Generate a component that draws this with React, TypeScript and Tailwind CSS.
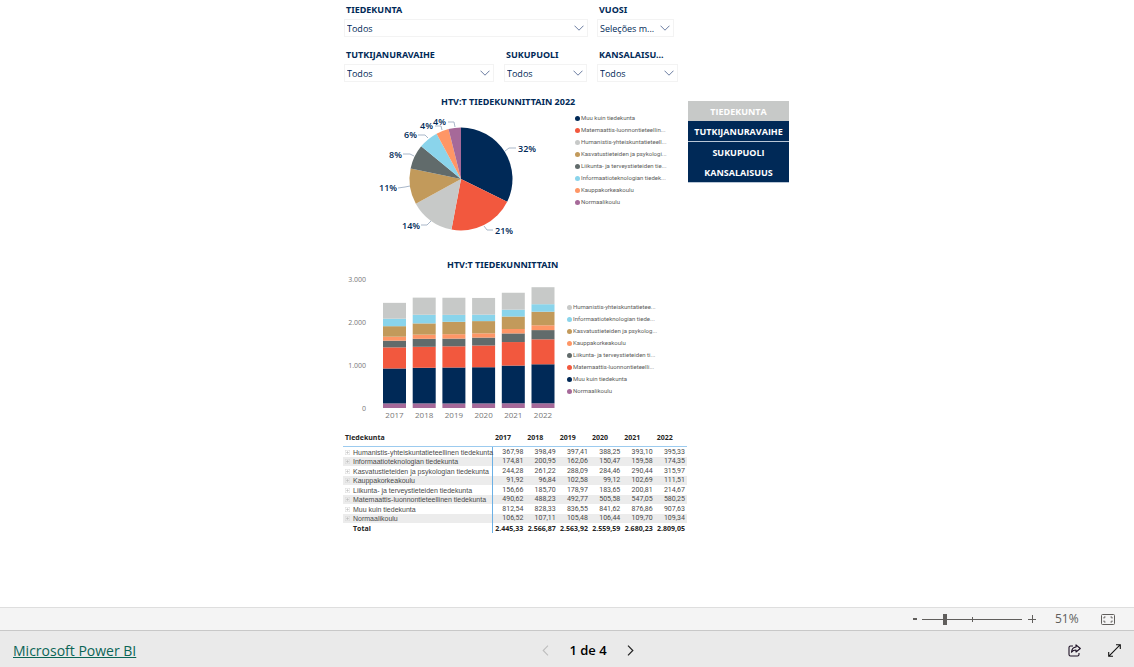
import { useState } from 'react';

const colors = {
  navy: '#002957',
  red: '#F2583E',
  grey: '#C7C9C8',
  gold: '#C29A5B',
  slate: '#616B6B',
  sky: '#8AD4EB',
  orange: '#FE9666',
  purple: '#A66999',
};

const years = ['2017', '2018', '2019', '2020', '2021', '2022'];

const faculties = [
  { name: 'Humanistis-yhteiskuntatieteellinen tiedekunta', short: 'Humanistis-yhteiskuntatietee...', color: colors.grey, values: [367.98, 398.49, 397.41, 388.25, 393.1, 395.33] },
  { name: 'Informaatioteknologian tiedekunta', short: 'Informaatioteknologian tiede...', color: colors.sky, values: [174.81, 200.95, 162.06, 150.47, 159.58, 174.35] },
  { name: 'Kasvatustieteiden ja psykologian tiedekunta', short: 'Kasvatustieteiden ja psykolog...', color: colors.gold, values: [244.28, 261.22, 288.09, 284.46, 290.44, 315.97] },
  { name: 'Kauppakorkeakoulu', short: 'Kauppakorkeakoulu', color: colors.orange, values: [91.92, 96.84, 102.58, 99.12, 102.69, 111.51] },
  { name: 'Liikunta- ja terveystieteiden tiedekunta', short: 'Liikunta- ja terveystieteiden ti...', color: colors.slate, values: [156.66, 185.7, 178.97, 183.65, 200.81, 214.67] },
  { name: 'Matemaattis-luonnontieteellinen tiedekunta', short: 'Matemaattis-luonnontieteelli...', color: colors.red, values: [490.62, 488.23, 492.77, 505.58, 547.05, 580.25] },
  { name: 'Muu kuin tiedekunta', short: 'Muu kuin tiedekunta', color: colors.navy, values: [812.54, 828.33, 836.55, 841.62, 876.86, 907.63] },
  { name: 'Normaalikoulu', short: 'Normaalikoulu', color: colors.purple, values: [106.52, 107.11, 105.48, 106.44, 109.7, 109.34] },
];

const totals = ['2.445,33', '2.566,87', '2.563,92', '2.559,59', '2.680,23', '2.809,05'];

const pieData = [
  { name: 'Muu kuin tiedekunta', value: 907.63, color: colors.navy, label: '32%', x: 143, y: 48, line: '130,47 134,44 141,44' },
  { name: 'Matemaattis-luonnontieteellin...', value: 580.25, color: colors.red, label: '21%', x: 120, y: 130, line: '109,122 112,126 118,126' },
  { name: 'Humanistis-yhteiskuntatieteell...', value: 395.33, color: colors.grey, label: '14%', x: 27, y: 125, line: '56,117 52,121 46,121' },
  { name: 'Kasvatustieteiden ja psykologi...', value: 315.97, color: colors.gold, label: '11%', x: 4, y: 87, line: '35,82 30,83 23,84' },
  { name: 'Liikunta- ja terveystieteiden tie...', value: 214.67, color: colors.slate, label: '8%', x: 14, y: 54, line: '39,52 35,50 28,50' },
  { name: 'Informaatioteknologian tiedek...', value: 174.35, color: colors.sky, label: '6%', x: 29, y: 34, line: '53,34 50,31 43,31' },
  { name: 'Kauppakorkeakoulu', value: 111.51, color: colors.orange, label: '4%', x: 45, y: 25, line: '67,26 66,22 60,22' },
  { name: 'Normaalikoulu', value: 109.34, color: colors.purple, label: '4%', x: 58, y: 21, line: '80,23 79,18 73,18' },
];

const tabs = ['TIEDEKUNTA', 'TUTKIJANURAVAIHE', 'SUKUPUOLI', 'KANSALAISUUS'];

const formatValue = (v: number) => v.toFixed(2).replace('.', ',');

export default function App() {
  return (
    <div className="flex min-h-screen flex-col bg-white font-['Open_Sans',sans-serif] text-[#002957]">
      <main className="mx-auto w-full max-w-[448px] flex-1">
        <Filters />
        <div className="mt-3 flex items-start">
          <div className="min-w-0 flex-1">
            <PieSection />
          </div>
          <ViewTabs />
        </div>
        <BarSection />
        <FacultyTable />
      </main>
      <footer>
        <ZoomBar />
        <PageBar />
      </footer>
    </div>
  );
}

function Filters() {
  return (
    <div className="space-y-3 px-px pt-1">
      <div className="flex gap-[9px]">
        <Slicer id="tiedekunta" label="TIEDEKUNTA" value="Todos" width="w-[244px]" />
        <Slicer id="vuosi" label="VUOSI" value="Seleções m..." width="w-[77px]" />
      </div>
      <div className="flex gap-[10px]">
        <Slicer id="tutkijanuravaihe" label="TUTKIJANURAVAIHE" value="Todos" width="w-[150px]" />
        <Slicer id="sukupuoli" label="SUKUPUOLI" value="Todos" width="w-[83px]" />
        <Slicer id="kansalaisuus" label="KANSALAISU..." value="Todos" width="w-[81px]" />
      </div>
    </div>
  );
}

function Slicer({ id, label, value, width }: { id: string; label: string; value: string; width: string }) {
  return (
    <div className={width}>
      <label htmlFor={id} className="block pl-0.5 font-['Noto_Sans',sans-serif] text-[9px] leading-3 font-bold whitespace-nowrap">
        {label}
      </label>
      <div className="relative mt-[3px]">
        <select
          id={id}
          className="block h-[18px] w-full appearance-none border border-[#F3F3F3] bg-white pt-0.5 pl-0.5 text-[9px] leading-[14px] text-[#002957] outline-none"
        >
          <option>{value}</option>
        </select>
        <svg className="pointer-events-none absolute top-1.5 right-1 h-[6px] w-[10px]" viewBox="0 0 10 6" fill="none" stroke="#5A6E96">
          <path d="M0.5 0.7 5 5.2 9.5 0.7" strokeWidth="0.9" />
        </svg>
      </div>
    </div>
  );
}

function ViewTabs() {
  const [active, setActive] = useState('TIEDEKUNTA');
  return (
    <div className="mt-[7px] mr-0.5 w-[101px]">
      {tabs.map((tab) => (
        <button
          key={tab}
          onClick={() => setActive(tab)}
          className={`box-content block h-5 w-full border-[#B9C6D6] text-center text-[9px] leading-[22px] font-bold text-white even:border-b ${tab === active ? 'bg-[#C7C9C8]' : 'bg-[#002957]'}`}
        >
          {tab}
        </button>
      ))}
    </div>
  );
}

function Legend({ items }: { items: { name: string; color: string }[] }) {
  return (
    <ul>
      {items.map((item) => (
        <li key={item.name} className="flex h-3 items-center gap-px font-[Roboto,sans-serif] text-[6px] leading-3 whitespace-nowrap text-[#605E5C]">
          <span className="h-[5px] w-[5px] rounded-full" style={{ backgroundColor: item.color }} />
          {item.name}
        </li>
      ))}
    </ul>
  );
}

function PieSection() {
  const total = pieData.reduce((sum, d) => sum + d.value, 0);
  const cx = 86;
  const cy = 75;
  const r = 51.5;
  let angle = 0;
  const slices = pieData.map((d) => {
    const start = angle;
    angle += (d.value / total) * Math.PI * 2;
    const x1 = cx + r * Math.sin(start);
    const y1 = cy - r * Math.cos(start);
    const x2 = cx + r * Math.sin(angle);
    const y2 = cy - r * Math.cos(angle);
    return { ...d, path: `M${cx} ${cy}L${x1} ${y1}A${r} ${r} 0 0 1 ${x2} ${y2}Z` };
  });

  return (
    <section>
      <h2 className="ml-[98px] font-['Noto_Sans',sans-serif] text-[9px] leading-4 font-bold whitespace-nowrap">HTV:T TIEDEKUNNITTAIN 2022</h2>
      <div className="flex">
        <svg className="ml-8 h-[147px] w-[172px] shrink-0" viewBox="0 6 172 147">
          {slices.map((s) => (
            <path key={s.name} d={s.path} fill={s.color} />
          ))}
          {slices.map((s) => (
            <g key={s.name}>
              <polyline points={s.line} fill="none" stroke="#A9B7C9" />
              <text x={s.x} y={s.y} fontSize="9" fontWeight="600" fill="#002957">
                {s.label}
              </text>
            </g>
          ))}
        </svg>
        <div className="mt-0.5 ml-7">
          <Legend items={pieData} />
        </div>
      </div>
    </section>
  );
}

function BarSection() {
  const stack = [...faculties].reverse();
  const base = 135;
  const scale = 0.043;

  return (
    <section>
      <h2 className="ml-[104px] font-['Noto_Sans',sans-serif] text-[9px] leading-4 font-bold whitespace-nowrap">HTV:T TIEDEKUNNITTAIN</h2>
      <div className="flex">
        <svg className="h-[152px] w-[224px] shrink-0" viewBox="0 0 224 152">
          {['0', '1.000', '2.000', '3.000'].map((tick, i) => (
            <text key={tick} x="23" y={base + 3 - i * 43} fontSize="7" textAnchor="end" fill="#777777">
              {tick}
            </text>
          ))}
          {years.map((year, i) => {
            const x = 40 + i * 29.7;
            let y = base;
            return (
              <g key={year}>
                {stack.map((f) => {
                  const h = f.values[i] * scale;
                  y -= h;
                  return <rect key={f.name} x={x} y={y} width="23" height={h} fill={f.color} />;
                })}
                <text x={x + 11.5} y={base + 10} fontSize="8" textAnchor="middle" fill="#777777">
                  {year}
                </text>
              </g>
            );
          })}
        </svg>
        <div className="mt-7">
          <Legend items={faculties.map((f) => ({ name: f.short, color: f.color }))} />
        </div>
      </div>
    </section>
  );
}

function FacultyTable() {
  return (
    <table className="mt-1 w-[344px] table-fixed border-separate border-spacing-0 text-[7px] leading-[9px] whitespace-nowrap text-[#4A4A4A]">
      <thead>
        <tr className="h-[18px] text-left text-[#252423]">
          <th className="w-[150px] border-b border-[#9CCBEF] p-0 pl-0.5 font-bold">Tiedekunta</th>
          {years.map((year) => (
            <th key={year} className="border-b border-[#9CCBEF] p-0 pl-0.5 font-bold">{year}</th>
          ))}
        </tr>
      </thead>
      <tbody className="font-[Roboto,sans-serif]">
        {faculties.map((f) => (
          <tr key={f.name} className="odd:h-[10px] even:h-[9px] even:bg-[#ECECEC]">
            <td className="border-r border-[#6BB0E5] p-0 font-['Liberation_Sans',sans-serif]">
              <span className="flex items-center gap-[3px] pl-0.5">
                <ExpandIcon />
                {f.name}
              </span>
            </td>
            {f.values.map((v, i) => (
              <td key={years[i]} className="p-0 pr-0.5 text-right">{formatValue(v)}</td>
            ))}
          </tr>
        ))}
      </tbody>
      <tfoot>
        <tr className="h-[10px] font-bold text-[#252423]">
          <td className="border-r border-[#6BB0E5] p-0 pl-[10px]">Total</td>
          {totals.map((t) => (
            <td key={t} className="p-0 pr-0.5 text-right">{t}</td>
          ))}
        </tr>
      </tfoot>
    </table>
  );
}

function ExpandIcon() {
  return (
    <svg className="h-[5px] w-[5px] shrink-0" viewBox="0 0 5 5" fill="none" stroke="#DADADA" strokeWidth="0.5">
      <rect x="0.25" y="0.25" width="4.5" height="4.5" />
      <path d="M1 2.5h3M2.5 1v3" stroke="#B5B5B5" />
    </svg>
  );
}

function ZoomBar() {
  const [zoom, setZoom] = useState(22);
  return (
    <div className="flex h-[23px] items-center justify-end border-t border-[#DEDEDE] bg-[#F4F4F4] pr-[19px] text-[#605E5C]">
      <button aria-label="Zoom out" className="flex h-4 w-2 items-center justify-center">
        <span className="h-0.5 w-1 bg-[#605E5C]" />
      </button>
      <div className="relative ml-[3px] flex h-4 w-[100px] items-center">
        <span className="absolute top-[6px] left-1/2 h-[5px] w-px bg-[#605E5C]" />
        <input
          type="range"
          aria-label="Zoom"
          value={zoom}
          onChange={(e) => setZoom(Number(e.target.value))}
          className="relative h-4 w-full appearance-none bg-transparent [&::-webkit-slider-runnable-track]:h-px [&::-webkit-slider-runnable-track]:bg-[#605E5C] [&::-webkit-slider-thumb]:-mt-[5px] [&::-webkit-slider-thumb]:h-[11px] [&::-webkit-slider-thumb]:w-1 [&::-webkit-slider-thumb]:appearance-none [&::-webkit-slider-thumb]:bg-[#605E5C]"
        />
      </div>
      <button aria-label="Zoom in" className="ml-1.5 flex h-4 w-2 items-center justify-center">
        <svg className="h-2 w-2" viewBox="0 0 8 8" stroke="#605E5C">
          <path d="M0 4.5h8M4.5 0v8" />
        </svg>
      </button>
      <span className="ml-[19px] w-[26px] text-xs leading-4">51%</span>
      <button aria-label="Fit to page" className="ml-5">
        <svg className="h-[11px] w-[14px]" viewBox="0 0 14 11" fill="none" stroke="#605E5C">
          <rect x="0.5" y="0.5" width="13" height="10" rx="1" />
          <path d="M3 4.5V3h1.5M9.5 3H11v1.5M11 6.5V8H9.5M4.5 8H3V6.5" />
        </svg>
      </button>
    </div>
  );
}

function PageBar() {
  return (
    <div className="grid h-[37px] grid-cols-3 items-center border-t border-[#C8C8C8] bg-[#EAEAEA] px-[13px] pt-[3px]">
      <a href="#" className="justify-self-start text-sm text-[#0B6556] underline">Microsoft Power BI</a>
      <nav className="flex items-center gap-5 justify-self-center pl-[42px] text-black">
        <button aria-label="Previous page" disabled>
          <svg className="h-[11px] w-[7px]" viewBox="0 0 7 11" fill="none" stroke="#BEBEBE" strokeWidth="1.1">
            <path d="M6 0.7 1.2 5.5 6 10.3" />
          </svg>
        </button>
        <span className="text-[13px] font-semibold whitespace-nowrap">1 de 4</span>
        <button aria-label="Next page">
          <svg className="h-[11px] w-[7px]" viewBox="0 0 7 11" fill="none" stroke="#222222" strokeWidth="1.2">
            <path d="M1 0.7 5.8 5.5 1 10.3" />
          </svg>
        </button>
      </nav>
      <div className="flex items-center gap-[27px] justify-self-end">
        <button aria-label="Share">
          <svg className="h-[13px] w-[13px]" viewBox="0 0 13 13" fill="none" stroke="#1C1024" strokeWidth="1.1" strokeLinejoin="round">
            <path d="M5 2H2.5A1.5 1.5 0 0 0 1 3.5v7A1.5 1.5 0 0 0 2.5 12h7a1.5 1.5 0 0 0 1.5-1.5V9" />
            <path d="M8 0.8 12.3 4.5 8 8V6C6 6 4.6 6.7 3.5 8.2 3.8 5.2 5.2 3.2 8 3z" />
          </svg>
        </button>
        <button aria-label="Full screen">
          <svg className="h-[13px] w-[13px]" viewBox="0 0 13 13" fill="none" stroke="#111111" strokeWidth="1.1">
            <path d="M8 0.7h4.3V5M12.3 0.7 0.7 12.3M0.7 8v4.3H5" />
          </svg>
        </button>
      </div>
    </div>
  );
}
